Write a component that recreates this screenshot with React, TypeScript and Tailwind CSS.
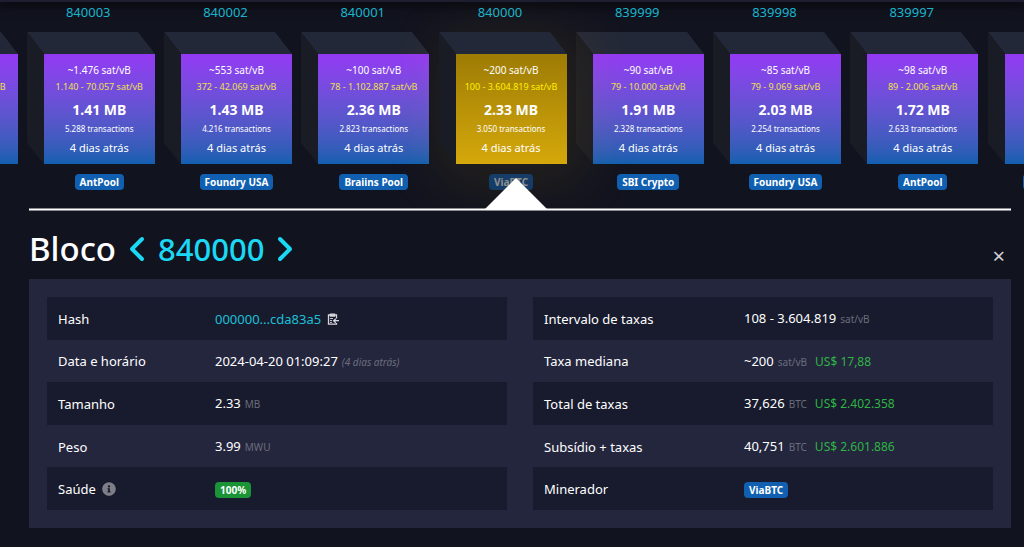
import React from "react";
import { FaAngleLeft, FaAngleRight } from "react-icons/fa6";
import { FaInfoCircle } from "react-icons/fa";

type Block = {
  height: string;
  median: string;
  range: string;
  size: string;
  txs: string;
  pool: string;
};

const blocks: Block[] = [
  { height: "840004", median: "~310 sat/vB", range: "1.140 - 60.120 sat/vB", size: "1.52 MB", txs: "4.120", pool: "AntPool" },
  { height: "840003", median: "~1.476 sat/vB", range: "1.140 - 70.057 sat/vB", size: "1.41 MB", txs: "5.288", pool: "AntPool" },
  { height: "840002", median: "~553 sat/vB", range: "372 - 42.069 sat/vB", size: "1.43 MB", txs: "4.216", pool: "Foundry USA" },
  { height: "840001", median: "~100 sat/vB", range: "78 - 1.102.887 sat/vB", size: "2.36 MB", txs: "2.823", pool: "Braiins Pool" },
  { height: "840000", median: "~200 sat/vB", range: "100 - 3.604.819 sat/vB", size: "2.33 MB", txs: "3.050", pool: "ViaBTC" },
  { height: "839999", median: "~90 sat/vB", range: "79 - 10.000 sat/vB", size: "1.91 MB", txs: "2.328", pool: "SBI Crypto" },
  { height: "839998", median: "~85 sat/vB", range: "79 - 9.069 sat/vB", size: "2.03 MB", txs: "2.254", pool: "Foundry USA" },
  { height: "839997", median: "~98 sat/vB", range: "89 - 2.006 sat/vB", size: "1.72 MB", txs: "2.633", pool: "AntPool" },
  { height: "839996", median: "~95 sat/vB", range: "90 - 99 sat/vB", size: "1.8 MB", txs: "2.100", pool: "Foundry USA" },
];

function Cube({ block, selected }: { block: Block; selected: boolean }) {
  return (
    <li className={`flex w-[111px] shrink-0 flex-col items-center ${selected ? "relative z-10" : ""}`}>
      <a href={`#${block.height}`} className="mr-[22px] text-[13px] leading-5 text-[#1ab4cb]">
        {block.height}
      </a>
      <div className={`relative mt-8 w-full ${selected ? "shadow-[0_0_60px_20px_rgba(255,190,0,0.09)]" : ""}`}>
        <svg className="absolute -top-[22px] -left-[17px]" width="128" height="132" aria-hidden="true">
          <path d="M0 0H111L128 22H17Z" fill="#232838" />
          <path d="M0 0L17 22V132L0 111Z" fill="#191b25" />
        </svg>
        <div
          className={`relative flex h-[110px] flex-col items-center whitespace-nowrap bg-linear-to-b pt-2 text-white ${
            selected ? "from-[#9d7c05] to-[#d5a80b]" : "from-[#9339f4] to-[#105fb0]"
          }`}
        >
          <span className="text-[10px] leading-4">{block.median}</span>
          <span className={`text-[9px] leading-[18px] ${selected ? "text-[#fff000]" : "text-[#f0e04c]"}`}>{block.range}</span>
          <span className="mt-1 text-[14px] leading-5 font-bold">{block.size}</span>
          <span className="text-[8px] leading-[18px]">{block.txs} transactions</span>
          <span className="text-[11px] leading-5">4 dias atrás</span>
        </div>
      </div>
      <Badge className={`mt-[10px] bg-[#105fb0] ${selected ? "opacity-50" : ""}`}>{block.pool}</Badge>
    </li>
  );
}

function Badge({ className, children }: { className: string; children: React.ReactNode }) {
  return (
    <span className={`inline-block rounded-sm px-[5px] text-[10px] leading-4 font-bold whitespace-nowrap text-white ${className}`}>
      {children}
    </span>
  );
}

function Unit({ children }: { children: React.ReactNode }) {
  return <span className="ml-1 text-[10px] text-[#6b6d7c]">{children}</span>;
}

function Fiat({ children }: { children: React.ReactNode }) {
  return <span className="ml-2 text-[12px] text-[#2fb344]">{children}</span>;
}

function Details({ rows, labelClass }: { rows: [React.ReactNode, React.ReactNode][]; labelClass: string }) {
  return (
    <table className="h-[213px] flex-1 text-[13px] leading-5 text-white">
      <tbody>
        {rows.map(([label, value], i) => (
          <tr key={i} className="h-[42px] odd:bg-[#181b2d]">
            <th scope="row" className={`pt-px pl-[11px] text-left font-normal ${labelClass}`}>
              {label}
            </th>
            <td className="pt-px">{value}</td>
          </tr>
        ))}
      </tbody>
    </table>
  );
}

function ClipboardIcon() {
  return (
    <svg width="12" height="12" viewBox="0 0 12 12" fill="none" stroke="#d5d6dc" strokeWidth="1.3">
      <path d="M3 2H1.5V11.2H9.5V10M8 2H9.5V5.5" />
      <path d="M3.5 1.2H7.5V3H3.5Z" fill="#d5d6dc" />
      <path d="M3 5.5H6M3 7.5H5M3 9.4H5" strokeWidth="0.9" />
      <path d="M12 7.7H7M8.8 5.7L6.6 7.7L8.8 9.7" />
    </svg>
  );
}

export default function App() {
  return (
    <div className="min-h-screen overflow-hidden bg-[#11131f] font-['Noto_Sans','Open_Sans',sans-serif]">
      <header className="h-[2px] bg-[#1d1f31] shadow-[0_0_12px_4px_rgba(0,0,0,0.6)]" />
      <nav aria-label="Blocos" className="flex justify-center overflow-hidden pr-[2px] pb-[18px]">
        <ul className="flex w-[1209px] shrink-0 justify-between">
          {blocks.map((b) => (
            <Cube key={b.height} block={b} selected={b.height === "840000"} />
          ))}
        </ul>
      </nav>

      <main className="mr-[13px] ml-[29px]">
        <div className="relative h-[3px] border-y border-[#8a8b90] bg-white">
          <svg className="absolute bottom-0 left-1/2 z-20 -ml-[36px]" width="64" height="32" aria-hidden="true">
            <path d="M32 0L64 32H0Z" fill="#fff" />
          </svg>
        </div>

        <div className="flex h-[68px] items-center justify-between pt-2">
          <h1 className="flex items-center text-[33px] leading-10 font-medium text-white">
            Bloco
            <a href="#840001" aria-label="Próximo bloco" className="ml-[6px] text-[#1bd8f4]">
              <FaAngleLeft size={32} />
            </a>
            <a href="#840000" className="mx-1 text-[31px] text-[#1bd8f4]">
              840000
            </a>
            <a href="#839999" aria-label="Bloco anterior" className="text-[#1bd8f4]">
              <FaAngleRight size={32} />
            </a>
          </h1>
          <button type="button" aria-label="Fechar" className="mt-3 mr-[6px] text-[22px] leading-5 text-[#d0d1d6]">
            ×
          </button>
        </div>

        <section className="flex gap-[26px] bg-[#24263e] p-[18px]">
          <Details
            labelClass="w-[168px]"
            rows={[
              [
                "Hash",
                <span className="flex items-center gap-[6px]">
                  <a href="#hash" className="text-[#1bc0d8]">000000...cda83a5</a>
                  <button type="button" aria-label="Copiar"><ClipboardIcon /></button>
                </span>,
              ],
              ["Data e horário", <>2024-04-20 01:09:27<i className="ml-1 text-[10px] text-[#6b6d7c]">(4 dias atrás)</i></>],
              ["Tamanho", <>2.33<Unit>MB</Unit></>],
              ["Peso", <>3.99<Unit>MWU</Unit></>],
              [
                <span className="flex items-center gap-[6px]">Saúde<FaInfoCircle size={14} color="#7d7e87" /></span>,
                <Badge className="bg-[#1a9436]">100%</Badge>,
              ],
            ]}
          />
          <Details
            labelClass="w-[211px]"
            rows={[
              ["Intervalo de taxas", <>108 - 3.604.819<Unit>sat/vB</Unit></>],
              ["Taxa mediana", <>~200<Unit>sat/vB</Unit><Fiat>US$ 17,88</Fiat></>],
              ["Total de taxas", <>37,626<Unit>BTC</Unit><Fiat>US$ 2.402.358</Fiat></>],
              ["Subsídio + taxas", <>40,751<Unit>BTC</Unit><Fiat>US$ 2.601.886</Fiat></>],
              ["Minerador", <Badge className="bg-[#105fb0]">ViaBTC</Badge>],
            ]}
          />
        </section>
      </main>
    </div>
  );
}
